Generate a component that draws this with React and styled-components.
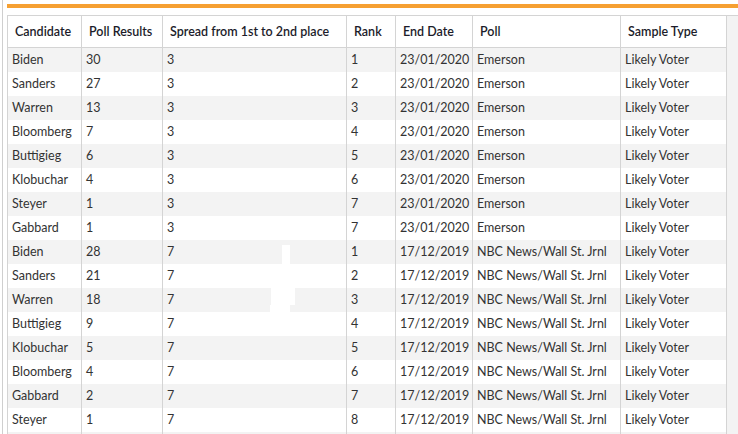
import React from "react";
import styled, { createGlobalStyle } from "styled-components";

const Global = createGlobalStyle`
  html, body { margin: 0; padding: 0; background: #fff; overflow: hidden; }
  body { width: 738px; height: 434px; font-family: Lato, "Noto Sans", sans-serif; }
`;

const Frame = styled.div`
  margin-left: 2px;
  border-left: 1px solid #cfcfcf;
  padding-left: 4px;
  height: 434px;
  display: flex;
  flex-direction: column;
  position: relative;
  overflow: hidden;
`;

const OrangeBar = styled.div`
  flex-shrink: 0;
  margin-top: 4px;
  height: 4px;
  background: #f6a032;
`;

const Body = styled.div`
  flex-shrink: 0;
  margin-top: 7px;
  display: flex;
  border-top: 1px solid #d4d4d4;
  min-height: 420px;
`;

const Filler = styled.div`
  flex: 1;
  background: #f3f3f3;
`;

const Table = styled.table`
  border-collapse: collapse;
  table-layout: fixed;
  width: 719px;
  font-size: 12.5px;
  color: #333;
  align-self: flex-start;
`;

const Th = styled.th`
  height: 31px;
  padding: 0 0 0 7px;
  text-align: left;
  font-weight: 600;
  color: #1c1c2a;
  border-left: 1px solid #d4d4d4;
  border-right: 1px solid #d4d4d4;
  border-bottom: 1px solid #d4d4d4;
  white-space: nowrap;
  overflow: hidden;
`;

const Tr = styled.tr`
  height: 24px;
  background: ${(p) => (p.$alt ? "#f3f3f3" : "#ffffff")};
`;

const Td = styled.td`
  padding: 0 0 0 4px;
  border-left: 1px solid #d4d4d4;
  border-right: 1px solid #d4d4d4;
  white-space: nowrap;
  overflow: hidden;
`;

const Blot = styled.div`
  position: absolute;
  background: #fff;
`;

const cols = [
  { name: "Candidate", w: 74 },
  { name: "Poll Results", w: 81 },
  { name: "Spread from 1st to 2nd place", w: 184 },
  { name: "Rank", w: 49 },
  { name: "End Date", w: 77 },
  { name: "Poll", w: 148 },
  { name: "Sample Type", w: 106 },
];

const E = ["23/01/2020", "Emerson"];
const N = ["17/12/2019", "NBC News/Wall St. Jrnl"];

const rows = [
  ["Biden", "30", "3", "1", ...E],
  ["Sanders", "27", "3", "2", ...E],
  ["Warren", "13", "3", "3", ...E],
  ["Bloomberg", "7", "3", "4", ...E],
  ["Buttigieg", "6", "3", "5", ...E],
  ["Klobuchar", "4", "3", "6", ...E],
  ["Steyer", "1", "3", "7", ...E],
  ["Gabbard", "1", "3", "7", ...E],
  ["Biden", "28", "7", "1", ...N],
  ["Sanders", "21", "7", "2", ...N],
  ["Warren", "18", "7", "3", ...N],
  ["Buttigieg", "9", "7", "4", ...N],
  ["Klobuchar", "5", "7", "5", ...N],
  ["Bloomberg", "4", "7", "6", ...N],
  ["Gabbard", "2", "7", "7", ...N],
  ["Steyer", "1", "7", "8", ...N],
];

export default function App() {
  return (
    <>
      <Global />
      <Frame>
        <OrangeBar />
        <Body>
          <Table>
            <colgroup>
              {cols.map((c) => (
                <col key={c.name} style={{ width: c.w }} />
              ))}
            </colgroup>
            <thead>
              <tr>
                {cols.map((c) => (
                  <Th key={c.name}>{c.name}</Th>
                ))}
              </tr>
            </thead>
            <tbody>
              {rows.map((r, i) => (
                <Tr key={i} $alt={i % 2 === 0}>
                  {[...r, "Likely Voter"].map((v, j) => (
                    <Td key={j}>{v}</Td>
                  ))}
                </Tr>
              ))}
              <Tr $alt>
                {cols.map((c) => (
                  <Td key={c.name} />
                ))}
              </Tr>
            </tbody>
          </Table>
          <Filler />
        </Body>
        <Blot style={{ left: 279, top: 245, width: 8, height: 19 }} />
        <Blot style={{ left: 268, top: 288, width: 24, height: 17 }} />
        <Blot style={{ left: 267, top: 305, width: 20, height: 7 }} />
      </Frame>
    </>
  );
}
